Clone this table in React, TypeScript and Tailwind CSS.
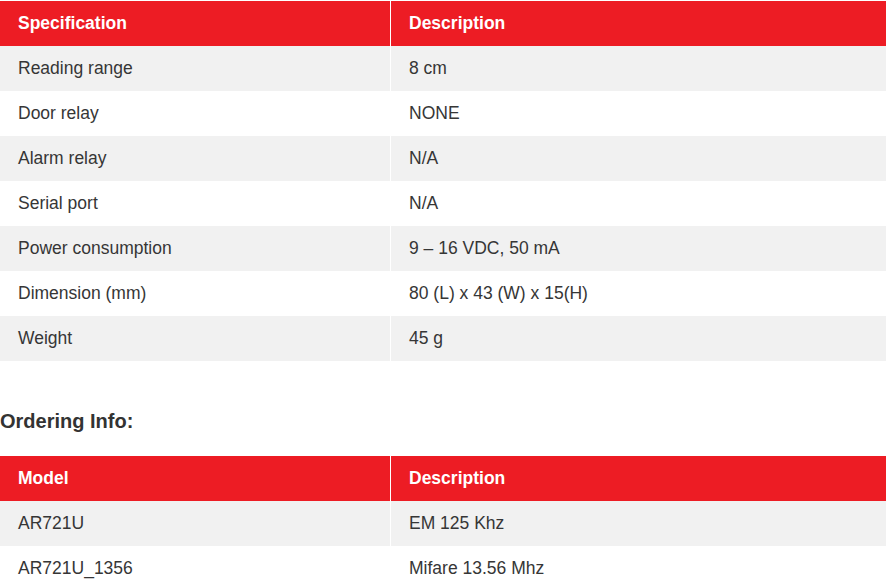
const specs = [
  ["Reading range", "8 cm"],
  ["Door relay", "NONE"],
  ["Alarm relay", "N/A"],
  ["Serial port", "N/A"],
  ["Power consumption", "9 – 16 VDC, 50 mA"],
  ["Dimension (mm)", "80 (L) x 43 (W) x 15(H)"],
  ["Weight", "45 g"],
];

const models = [
  ["AR721U", "EM 125 Khz"],
  ["AR721U_1356", "Mifare 13.56 Mhz"],
];

function SpecTable({ head, rows }: { head: [string, string]; rows: string[][] }) {
  return (
    <div className="w-full">
      <div className="flex h-[45px] bg-[#ed1c24] text-white font-bold">
        <div className="w-[391px] shrink-0 border-r border-white flex items-center pl-[18px]">{head[0]}</div>
        <div className="flex-1 flex items-center pl-[18px]">{head[1]}</div>
      </div>
      {rows.map((r, i) => (
        <div key={r[0]} className={`flex h-[45px] text-[#363636] ${i % 2 === 0 ? "bg-[#f1f1f1]" : "bg-white"}`}>
          <div className="w-[391px] shrink-0 border-r border-white flex items-center pl-[18px]">{r[0]}</div>
          <div className="flex-1 flex items-center pl-[18px]">{r[1]}</div>
        </div>
      ))}
    </div>
  );
}

export default function App() {
  return (
    <div className="min-h-screen bg-white text-[17.5px] overflow-hidden" style={{ fontFamily: '"Liberation Sans", Arial, sans-serif' }}>
      <div className="pt-px">
        <SpecTable head={["Specification", "Description"]} rows={specs} />
      </div>
      <h3 className="pt-[48px] pb-[23px] text-[20px] leading-[24px] font-bold text-[#333333]">Ordering Info:</h3>
      <SpecTable head={["Model", "Description"]} rows={models} />
    </div>
  );
}
